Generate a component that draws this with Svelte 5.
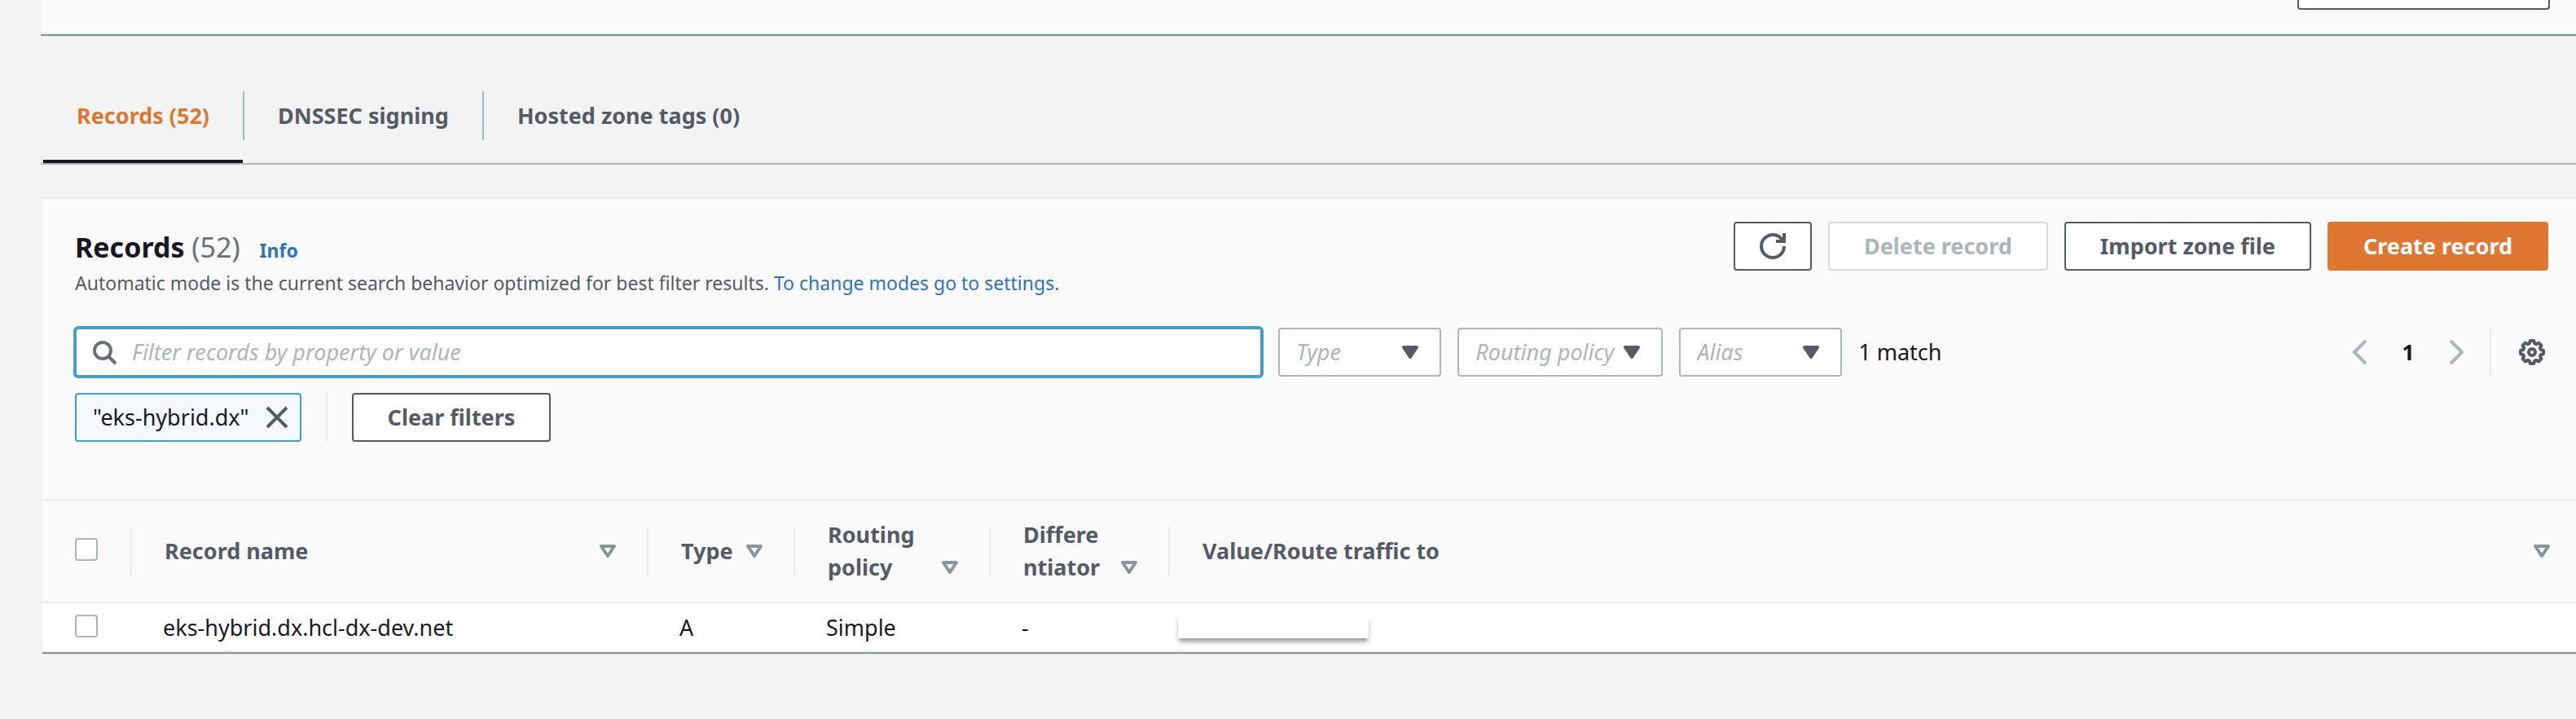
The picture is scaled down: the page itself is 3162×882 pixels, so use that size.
<script>
  let query = $state('');
  let activeTab = $state('records');

  const tabs = [
    { id: 'records', label: 'Records (52)' },
    { id: 'dnssec', label: 'DNSSEC signing' },
    { id: 'tags', label: 'Hosted zone tags (0)' }
  ];

  const selects = [
    { label: 'Type', wide: false },
    { label: 'Routing policy', wide: true },
    { label: 'Alias', wide: false }
  ];

  // Outline of the eight-toothed settings gear, in a 32 unit box.
  const at = (deg, r) => {
    const a = (deg * Math.PI) / 180;
    return `${(16 + r * Math.cos(a)).toFixed(2)} ${(16 + r * Math.sin(a)).toFixed(2)}`;
  };
  const gear =
    'M' +
    Array.from({ length: 8 }, (_, k) => k * 45)
      .flatMap((d) => [at(d - 17, 11.2), at(d - 9, 14.1), at(d + 9, 14.1), at(d + 17, 11.2)])
      .join('L') +
    'Z';
</script>

{#snippet sort(name)}
  <button class="sort" aria-label={`Sort by ${name}`}>
    <svg width="20" height="16" viewBox="0 0 20 16"><path d="M2 2h16l-8 12z" /></svg>
  </button>
{/snippet}

<div class="page">
  <section class="details">
    <button class="details-button" aria-label="Edit hosted zone"></button>
  </section>

  <div class="tabs" role="tablist">
    {#each tabs as tab, i}
      {#if i > 0}<span class="tab-divider"></span>{/if}
      <button
        class="tab"
        role="tab"
        class:active={activeTab === tab.id}
        aria-selected={activeTab === tab.id}
        onclick={() => (activeTab = tab.id)}>{tab.label}</button>
    {/each}
  </div>

  <section class="panel">
    <header class="panel-header">
      <div class="title-block">
        <div class="title-line">
          <h2>Records <span class="count">(52)</span></h2>
          <a class="info" href="#info">Info</a>
        </div>
        <p class="description">
          Automatic mode is the current search behavior optimized for best filter results.
          <a href="#settings">To change modes go to settings.</a>
        </p>
      </div>
      <div class="actions">
        <button class="btn icon-only" aria-label="Refresh">
          <svg class="icon" viewBox="0 0 16 16"><path d="M15 8c0 3.87-3.13 7-7 7s-7-3.13-7-7 3.13-7 7-7c2.79 0 5.2 1.63 6.33 4M10 5h5V0" /></svg>
        </button>
        <button class="btn" disabled>Delete record</button>
        <button class="btn">Import zone file</button>
        <button class="btn primary">Create record</button>
      </div>
    </header>

    <div class="filters">
      <label class="search">
        <svg class="icon" viewBox="0 0 16 16"><circle cx="7" cy="7" r="5" /><path d="m10.5 10.5 4.5 4.5" /></svg>
        <input type="text" aria-label="Filter records" placeholder="Filter records by property or value" bind:value={query} />
      </label>
      {#each selects as s}
        <div class="select" class:wide={s.wide}>
          <select aria-label={s.label}><option>{s.label}</option></select>
          <svg width="20" height="16" viewBox="0 0 20 16"><path d="M2 2h16l-8 12z" /></svg>
        </div>
      {/each}
      <span class="matches">1 match</span>
      <nav class="pager" aria-label="Pagination">
        <button class="plain" aria-label="Previous page">
          <svg class="icon" viewBox="0 0 16 16"><path d="M12 1 5 8l7 7" /></svg>
        </button>
        <button class="plain current">1</button>
        <button class="plain" aria-label="Next page">
          <svg class="icon" viewBox="0 0 16 16"><path d="m4 1 7 7-7 7" /></svg>
        </button>
        <span class="divider"></span>
        <button class="plain settings" aria-label="Preferences">
          <svg class="icon gear" viewBox="0 0 32 32"><path d={gear} /><circle cx="16" cy="16" r="4" /></svg>
        </button>
      </nav>
    </div>

    <div class="tokens">
      <div class="token">
        <span>"eks-hybrid.dx"</span>
        <button class="plain" aria-label="Remove filter">
          <svg class="icon" viewBox="0 0 16 16"><path d="m2 2 12 12M14 2 2 14" /></svg>
        </button>
      </div>
      <span class="divider"></span>
      <button class="btn">Clear filters</button>
    </div>

    <table>
      <colgroup>
        <col class="c-check" /><col class="c-name" /><col class="c-type" /><col class="c-routing" /><col class="c-diff" /><col />
      </colgroup>
      <thead>
        <tr>
          <th class="check"><input type="checkbox" aria-label="Select all records" /></th>
          <th><div class="head"><span>Record name</span>{@render sort('record name')}</div></th>
          <th><div class="head"><span>Type</span>{@render sort('type')}</div></th>
          <th><div class="head"><span>Routing policy</span>{@render sort('routing policy')}</div></th>
          <th><div class="head"><span>Differe<wbr />ntiator</span>{@render sort('differentiator')}</div></th>
          <th class="last"><div class="head"><span>Value/Route traffic to</span>{@render sort('value')}</div></th>
        </tr>
      </thead>
      <tbody>
        <tr>
          <td class="check"><input type="checkbox" aria-label="Select eks-hybrid.dx.hcl-dx-dev.net" /></td>
          <td>eks-hybrid.dx.hcl-dx-dev.net</td>
          <td>A</td>
          <td>Simple</td>
          <td>-</td>
          <td class="value"><div class="cover"></div></td>
        </tr>
      </tbody>
    </table>
  </section>
</div>

<style>
  :global(body) {
    background: #f2f4f3;
  }
  .page {
    font: 27px/40px 'Noto Sans', 'Open Sans', sans-serif;
    color: #16191f;
    padding: 0 0 80px 50px;
  }
  button,
  input,
  select {
    font: inherit;
    color: inherit;
    margin: 0;
    box-sizing: border-box;
  }
  a {
    color: #2e73b8;
    text-decoration: none;
  }
  svg {
    display: block;
    flex: none;
    fill: none;
    stroke: currentColor;
  }
  .icon {
    width: 32px;
    height: 32px;
    stroke-width: 2;
  }
  .gear {
    stroke-width: 4;
    stroke-linejoin: round;
  }

  .details {
    display: flex;
    justify-content: flex-end;
    padding: 0 32px 28px 0;
    background: #fafafa;
    border-bottom: 2px solid #eaeded;
    box-shadow: 0 2px 1px #879596;
    clip-path: inset(0 0 -6px 0);
  }
  .details-button {
    width: 310px;
    height: 12px;
    padding: 0;
    background: #fff;
    border: 2px solid #545b64;
    border-top: 0;
    border-radius: 0 0 4px 4px;
  }

  .tabs {
    display: flex;
    align-items: center;
    margin-top: 42px;
    padding-left: 3px;
    border-bottom: 2px solid #aab7b8;
  }
  .tab {
    height: 116px;
    padding: 4px 41px 0;
    background: none;
    border: 0;
    border-bottom: 4px solid transparent;
    color: #545b64;
    font-weight: 700;
  }
  .tab.active {
    color: #dd7731;
    border-bottom-color: #16191f;
  }
  .tab-divider {
    width: 2px;
    height: 60px;
    background: #aab7b8;
  }

  .panel {
    margin: 40px 0 0 2px;
    background: #fafafa;
    border-top: 2px solid #eaeded;
    border-bottom: 2px solid #eaeded;
    box-shadow: 0 2px 1px #879596;
    clip-path: inset(0 0 -6px 0);
  }
  .panel-header {
    display: flex;
    justify-content: space-between;
    align-items: flex-start;
    padding: 28px 34px 0 40px;
  }
  .title-block {
    padding-top: 6px;
  }
  .title-line {
    display: flex;
    align-items: baseline;
    gap: 24px;
  }
  h2 {
    margin: 0;
    font-size: 34px;
    line-height: 50px;
    font-weight: 700;
  }
  .count {
    font-weight: 400;
    color: #687078;
  }
  .info {
    font-size: 23px;
    font-weight: 700;
  }
  .description {
    margin: 0;
    font-size: 23px;
    line-height: 38px;
    color: #545b64;
  }
  .actions {
    display: flex;
    gap: 20px;
  }
  .btn {
    height: 60px;
    padding: 0 42px;
    background: #fff;
    border: 2px solid #545b64;
    border-radius: 4px;
    color: #545b64;
    font-weight: 700;
    white-space: nowrap;
  }
  .btn:disabled {
    border-color: #d5dbdb;
    color: #aab7b8;
  }
  .btn.primary {
    background: #dd7731;
    border-color: #dd7731;
    color: #fff;
  }
  .btn.icon-only {
    padding: 0 30px;
  }

  .filters {
    display: flex;
    align-items: center;
    gap: 20px;
    padding: 36px 34px 0 40px;
  }
  .search {
    display: flex;
    align-items: center;
    gap: 18px;
    flex: 0 1 48%;
    box-sizing: border-box;
    height: 60px;
    padding: 0 18px;
    background: #fff;
    border: 2px solid #449fc7;
    border-radius: 4px;
    box-shadow: 0 0 0 2px #449fc7;
    color: #687078;
  }
  .search input {
    flex: 1;
    min-width: 0;
    padding: 0;
    border: 0;
    outline: 0;
    background: none;
    color: #16191f;
  }
  .search input::placeholder {
    color: #aab7b8;
    opacity: 1;
    font-style: italic;
  }
  .select {
    position: relative;
    width: 200px;
    color: #545b64;
  }
  .select.wide {
    width: 252px;
  }
  .select select {
    display: block;
    width: 100%;
    height: 60px;
    padding: 0 20px;
    appearance: none;
    background: #fff;
    border: 2px solid #aab7b8;
    border-radius: 4px;
    color: #aab7b8;
    font-style: italic;
  }
  .select svg {
    position: absolute;
    top: 22px;
    right: 28px;
    pointer-events: none;
    fill: currentColor;
    stroke-width: 4;
    stroke-linejoin: round;
  }
  .matches {
    white-space: nowrap;
  }
  .pager {
    display: flex;
    align-items: center;
    margin-left: auto;
    padding-right: 4px;
    color: #aab7b8;
  }
  .plain {
    padding: 0;
    background: none;
    border: 0;
  }
  .current {
    width: 88px;
    color: #16191f;
    font-weight: 700;
  }
  .divider {
    width: 2px;
    height: 60px;
    background: #eaeded;
  }
  .pager .divider {
    margin: 0 34px 0 24px;
  }
  .settings {
    color: #545b64;
  }

  .tokens {
    display: flex;
    align-items: center;
    gap: 30px;
    padding: 20px 34px 70px 40px;
  }
  .token {
    display: flex;
    align-items: center;
    gap: 18px;
    box-sizing: border-box;
    height: 60px;
    padding: 0 12px 0 20px;
    background: #f2fafd;
    border: 2px solid #449fc7;
    border-radius: 4px;
  }
  .token button {
    color: #545b64;
  }

  table {
    width: 100%;
    table-layout: fixed;
    border-collapse: separate;
    border-spacing: 0;
  }
  .c-check {
    width: 110px;
  }
  .c-name {
    width: 634px;
  }
  .c-type {
    width: 180px;
  }
  .c-routing {
    width: 240px;
  }
  .c-diff {
    width: 220px;
  }
  th {
    position: relative;
    padding: 22px 40px;
    border-top: 2px solid #eaeded;
    border-bottom: 2px solid #eaeded;
    color: #545b64;
    font-weight: 700;
    text-align: left;
    vertical-align: middle;
  }
  th::after {
    content: '';
    position: absolute;
    top: 32px;
    bottom: 30px;
    right: 0;
    width: 2px;
    background: #eaeded;
  }
  th.last {
    padding-right: 32px;
  }
  th.last::after {
    display: none;
  }
  .head {
    display: flex;
    justify-content: space-between;
  }
  .sort {
    display: flex;
    align-items: center;
    align-self: flex-end;
    height: 40px;
    padding: 0;
    background: none;
    border: 0;
    color: #879596;
  }
  .sort svg {
    stroke-width: 4;
    stroke-linejoin: round;
  }
  td {
    padding: 10px 38px 8px;
    background: #fff;
    white-space: nowrap;
  }
  th.check,
  td.check {
    padding-left: 40px;
    padding-right: 0;
  }
  .check input {
    display: block;
    width: 28px;
    height: 28px;
    margin-bottom: 4px;
    appearance: none;
    background: #fff;
    border: 2px solid #aab7b8;
    border-radius: 4px;
  }
  td.value {
    padding-left: 10px;
  }
  .cover {
    width: 234px;
    height: 28px;
    margin-bottom: 2px;
    background: #fff;
    box-shadow: 0 5px 6px -1px rgba(0, 0, 0, 0.42);
  }
</style>
